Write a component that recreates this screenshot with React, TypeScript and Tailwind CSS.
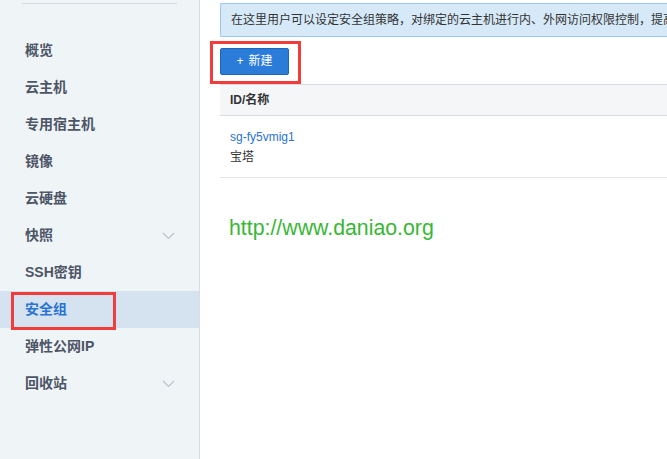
import React from "react";

const menu = [
  { label: "概览" },
  { label: "云主机" },
  { label: "专用宿主机" },
  { label: "镜像" },
  { label: "云硬盘" },
  { label: "快照", arrow: true },
  { label: "SSH密钥" },
  { label: "安全组", active: true },
  { label: "弹性公网IP" },
  { label: "回收站", arrow: true },
];

const Chevron = () => (
  <svg width="13" height="8" viewBox="0 0 13 8" fill="none" className="mr-[24px]">
    <path d="M1 1l5.5 5.5L12 1" stroke="#b9c3cc" strokeWidth="1.2" />
  </svg>
);

const App = () => {
  return (
    <div
      className="flex w-[667px] h-[459px] overflow-hidden bg-white"
      style={{ fontFamily: '"Liberation Sans", "Noto Sans CJK SC", sans-serif' }}
    >
      {/* Sidebar */}
      <div className="w-[200px] shrink-0 bg-[#eff4f6] border-r border-[#d6dee5] flex flex-col">
        <div className="mx-[22px] mt-[3px] border-t border-[#d3dae0]" />
        <div className="mt-[28px] flex flex-col">
          {menu.map((m) => (
            <div
              key={m.label}
              className={`relative h-[37px] flex items-center justify-between ${
                m.active ? "bg-[#d5e2ef]" : ""
              }`}
            >
              <span
                className={`pl-[25px] text-[14px] font-bold ${
                  m.active ? "text-[#2a73d2]" : "text-[#4d5566]"
                }`}
              >
                {m.label}
              </span>
              {m.arrow && <Chevron />}
              {m.active && (
                <div className="absolute left-[11px] top-[1px] w-[105px] h-[38px] border-[3px] border-[#f23b3b]" />
              )}
            </div>
          ))}
        </div>
      </div>

      {/* Main */}
      <div className="flex-1 flex flex-col pl-[20px]">
        <div className="mt-[3px] h-[34px] bg-[#d6e9f8] border border-[#a2c8ea] rounded-l-[2px] border-r-0 flex items-center pl-[10px] whitespace-nowrap overflow-hidden">
          <span className="text-[12px] text-[#333]">
            在这里用户可以设定安全组策略，对绑定的云主机进行内、外网访问权限控制，提高云主机的安全性。
          </span>
        </div>

        <div className="relative h-[47px] flex items-center">
          <button className="mt-[1px] w-[69px] h-[27px] bg-[#2b7bd9] border border-[#1f66bb] rounded-[2px] text-white text-[12px] flex items-center justify-center gap-[5px]">
            <span>+</span>
            <span>新建</span>
          </button>
          <div className="absolute left-[-10px] top-[4px] w-[91px] h-[43px] border-[3px] border-[#f23b3b]" />
        </div>

        <div className="h-[32px] bg-[#f5f6f8] border-t border-b border-[#d8dbe2] flex items-center pl-[10px]">
          <span className="text-[12px] font-bold text-[#333]">ID/名称</span>
        </div>
        <div className="h-[62px] border-b border-[#e3e5ea] flex flex-col justify-center pl-[10px] gap-[4px]">
          <span className="text-[12px] text-[#2a73d2] leading-[16px]">sg-fy5vmig1</span>
          <span className="text-[12px] text-[#333] leading-[16px]">宝塔</span>
        </div>

        <div className="mt-[38px] pl-[9px] text-[21.3px] text-[#39b636] leading-[24px]">
          http://www.daniao.org
        </div>
      </div>
    </div>
  );
};

export default App;
